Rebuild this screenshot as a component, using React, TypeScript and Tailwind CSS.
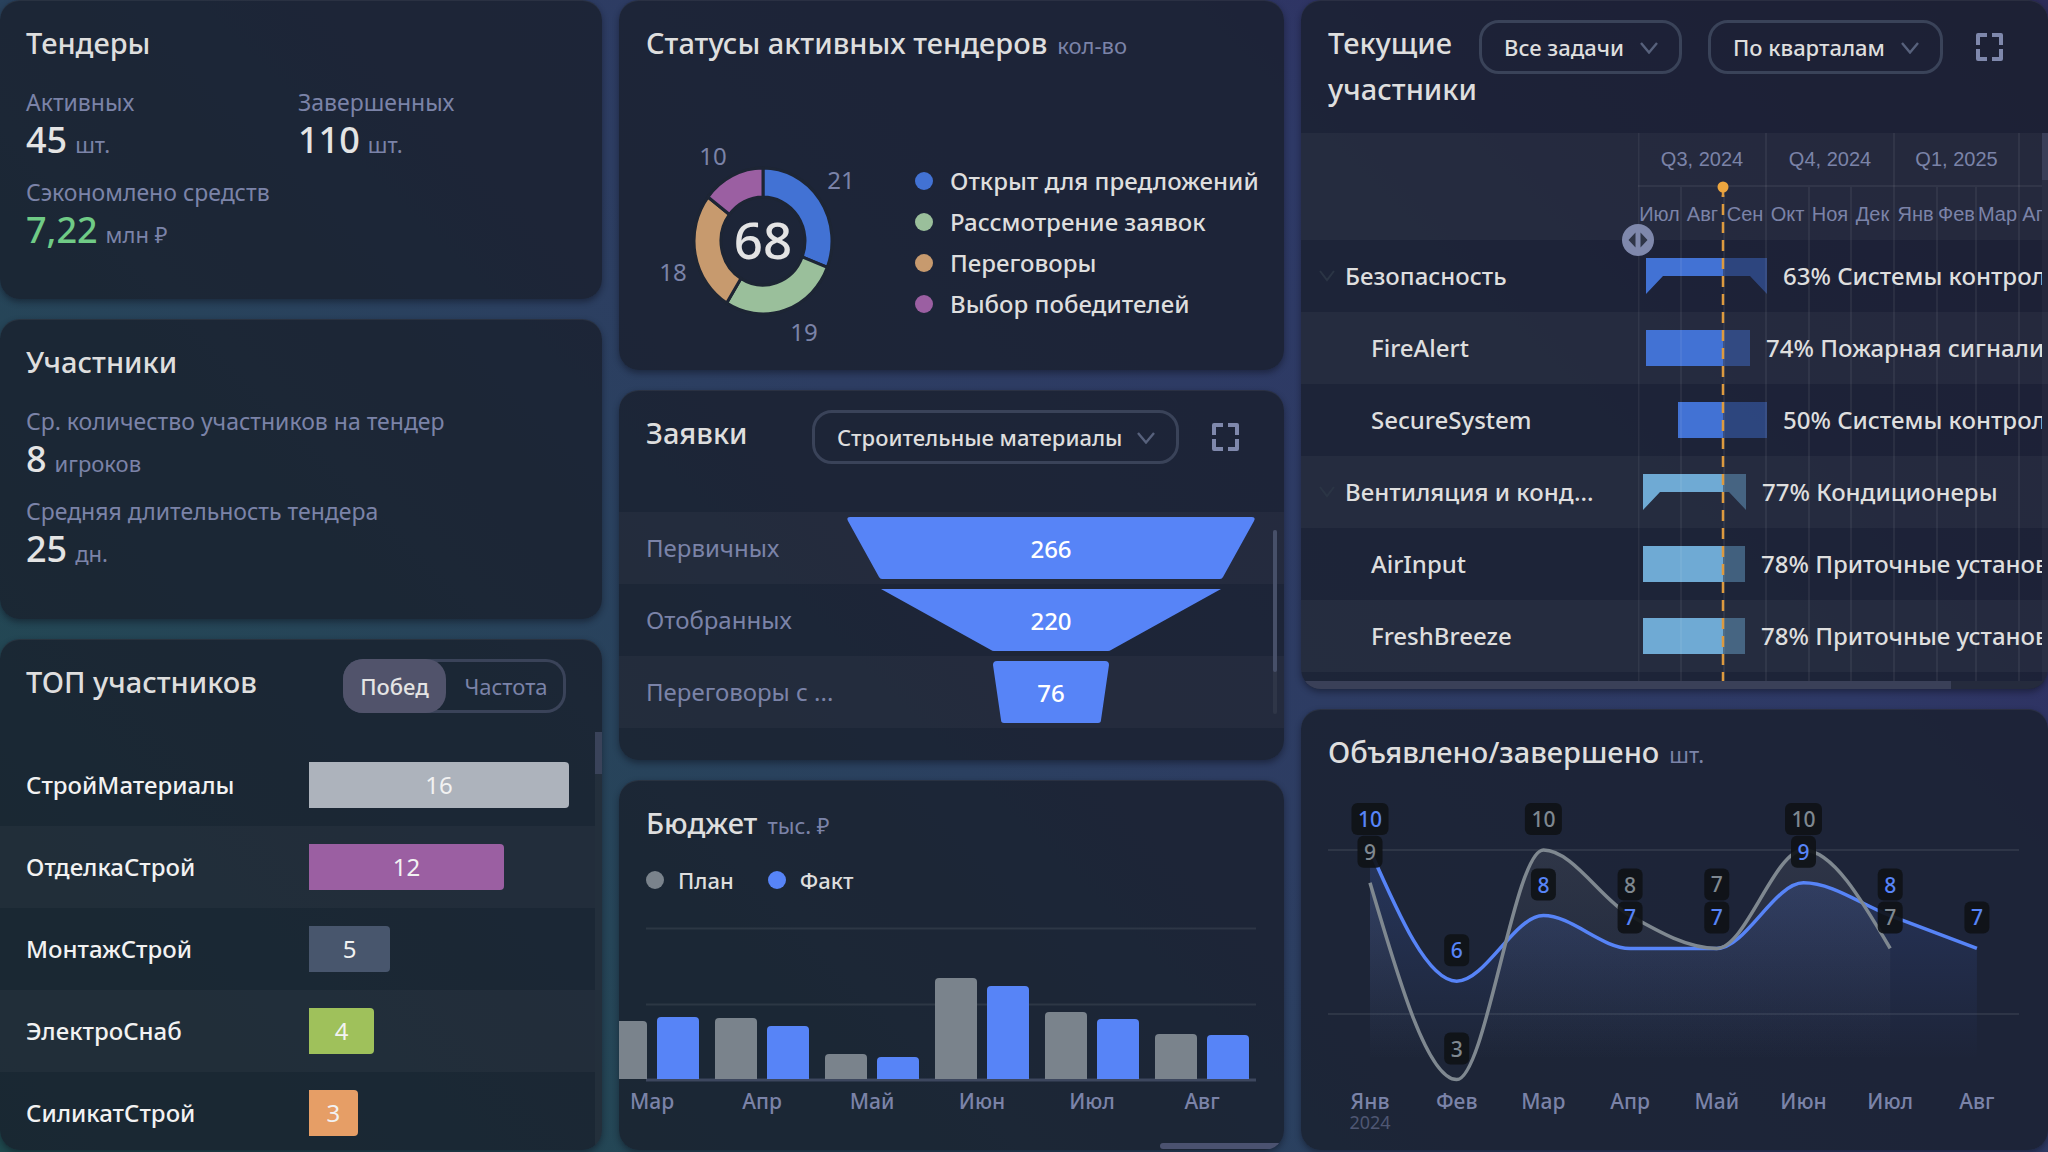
import React, { useState } from "react";

const MONTHS = ["Янв", "Фев", "Мар", "Апр", "Май", "Июн", "Июл", "Авг"];

function Card({ className = "", children }: { className?: string; children: React.ReactNode }) {
  return (
    <section
      className={`relative min-w-0 overflow-hidden rounded-[20px] bg-[#181d29]/75 shadow-[0_3px_6px_rgba(10,14,24,0.45),inset_0_1px_0_rgba(255,255,255,0.06)] ${className}`}
    >
      {children}
    </section>
  );
}

function Title({ children, unit }: { children: React.ReactNode; unit?: string }) {
  return (
    <h2 className="text-[29px] font-medium leading-[46px] text-[#dedede]">
      {children}
      {unit && <span className="ml-2.5 text-[22px] font-normal leading-none text-[#7b83a8]">{unit}</span>}
    </h2>
  );
}

function Metric({ label, value, unit, green = false }: { label: string; value: string; unit: string; green?: boolean }) {
  return (
    <div>
      <dt className="text-[23px] leading-8 text-[#7b83a8]">{label}</dt>
      <dd className="flex items-baseline gap-2">
        <span className={`text-[36px] font-medium leading-[44px] ${green ? "text-[#70cb86]" : "text-[#e4e4e4]"}`}>{value}</span>
        <span className="text-[22px] leading-none text-[#7b83a8]">{unit}</span>
      </dd>
    </div>
  );
}

function Picker({ label, options, className }: { label: string; options: string[]; className: string }) {
  return (
    <div className={`relative shrink-0 ${className}`}>
      <select
        aria-label={label}
        className="h-[54px] w-full appearance-none rounded-[20px] border-[3px] border-[#3a4359] bg-transparent pl-[22px] pr-12 text-[22px] font-medium text-[#dedede] outline-none"
      >
        {options.map((o) => (
          <option key={o} className="bg-[#1c2637]">{o}</option>
        ))}
      </select>
      <svg viewBox="0 0 18 12" className="pointer-events-none absolute right-6 top-[22px] h-3 w-[18px]" fill="none" stroke="#57617c" strokeWidth="2.4">
        <path d="M1 1l8 9.5L17 1" />
      </svg>
    </div>
  );
}

function ExpandButton() {
  return (
    <button type="button" aria-label="Развернуть" className="mt-[13px] h-7 w-[27px] shrink-0">
      <svg viewBox="0 0 27 28" className="h-7 w-[27px]" fill="none" stroke="#7f88ac" strokeWidth="4" strokeLinejoin="round">
        <path d="M2 12V2H11M16 2H25V12M25 16V26H16M11 26H2V16" />
      </svg>
    </button>
  );
}

/* ---------- ТОП участников ---------- */

const LEADERS = [
  { name: "СтройМатериалы", wins: 16, color: "bg-[#adb3bc]" },
  { name: "ОтделкаСтрой", wins: 12, color: "bg-[#9b5fa2]" },
  { name: "МонтажСтрой", wins: 5, color: "bg-[#48566d]" },
  { name: "ЭлектроСнаб", wins: 4, color: "bg-[#9fc15b]" },
  { name: "СиликатСтрой", wins: 3, color: "bg-[#e69e66]" },
];

const MODES = [
  { name: "Побед", width: "w-[103px]" },
  { name: "Частота", width: "w-[120px]" },
];

function Leaders() {
  const [mode, setMode] = useState("Побед");
  return (
    <Card className="flex flex-1 flex-col">
      <div className="flex items-start justify-between pl-[26px] pr-9 pt-5">
        <Title>ТОП участников</Title>
        <div className="flex h-[54px] rounded-[20px] shadow-[inset_0_0_0_3px_#3a4359]">
          {MODES.map((m) => (
            <button
              key={m.name}
              type="button"
              aria-pressed={mode === m.name}
              onClick={() => setMode(m.name)}
              className={`rounded-[20px] text-[22px] ${m.width} ${mode === m.name ? "bg-[#51536b] font-medium text-[#e4e4e4]" : "text-[#7b83a8]"}`}
            >
              {m.name}
            </button>
          ))}
        </div>
      </div>
      <div className="mt-[19px] flex h-[418px] overflow-hidden">
        <ul className="min-w-0 flex-1 pt-3">
          {LEADERS.map((l) => (
            <li key={l.name} className="flex h-[82px] items-center pl-[26px] pr-[26px] even:bg-white/[0.03]">
              <span className="w-[283px] shrink-0 text-[24px] font-medium text-[#f2f2f2]">{l.name}</span>
              <div className="flex-1">
                <div
                  className={`flex h-[46px] items-center justify-center rounded-r-[4px] text-[24px] text-[#f2f2f2] ${l.color}`}
                  style={{ width: `${(l.wins / 16) * 100}%` }}
                >
                  {l.wins}
                </div>
              </div>
            </li>
          ))}
        </ul>
        <div className="w-[7px] bg-white/[0.04]">
          <div className="h-[42px] bg-[#3a435a]" />
        </div>
      </div>
    </Card>
  );
}

/* ---------- Статусы ---------- */

const STATUSES = [
  { name: "Открыт для предложений", n: 21, fill: "#4272d4", dot: "bg-[#4272d4]", lx: 195, ly: 53 },
  { name: "Рассмотрение заявок", n: 19, fill: "#9abf9b", dot: "bg-[#9abf9b]", lx: 158, ly: 205 },
  { name: "Переговоры", n: 18, fill: "#c79a6e", dot: "bg-[#c79a6e]", lx: 27, ly: 145 },
  { name: "Выбор победителей", n: 10, fill: "#9b5fa2", dot: "bg-[#9b5fa2]", lx: 67, ly: 29 },
];

function Donut() {
  const total = STATUSES.reduce((s, x) => s + x.n, 0);
  const at = (v: number, rx: number, ry: number) => {
    const a = (v / total) * Math.PI * 2;
    return `${(117 + rx * Math.sin(a)).toFixed(2)} ${(105 - ry * Math.cos(a)).toFixed(2)}`;
  };
  let from = 0;
  return (
    <svg viewBox="0 0 240 212" className="w-[240px] shrink-0" textAnchor="middle">
      {STATUSES.map((s) => {
        const a = from;
        const b = (from += s.n);
        return (
          <g key={s.name}>
            <path
              d={`M${at(a, 69, 73)}A69 73 0 0 1 ${at(b, 69, 73)}L${at(b, 42, 44)}A42 44 0 0 0 ${at(a, 42, 44)}Z`}
              fill={s.fill}
              stroke="#1d2534"
              strokeWidth="3"
            />
            <text x={s.lx} y={s.ly} fontSize="24" fill="#7b83a8">{s.n}</text>
          </g>
        );
      })}
      <text x="117" y="123" fontSize="51" fontWeight="500" fill="#e4e4e4">{total}</text>
    </svg>
  );
}

/* ---------- Заявки ---------- */

const FUNNEL = [
  { name: "Первичных", n: 266, d: "M3 0H405Q409 0 407 4L376 60Q375 62 373 62H35Q33 62 32 60L1 4Q-1 0 3 0Z" },
  { name: "Отобранных", n: 220, d: "M34 0H374L264 61Q263 62 261 62H147Q145 62 144 61Z" },
  { name: "Переговоры с ...", n: 76, d: "M150 0H258Q262 0 262 4L254 59Q254 62 251 62H157Q154 62 154 59L146 4Q146 0 150 0Z" },
];

function Requests() {
  return (
    <Card className="h-[370px]">
      <div className="flex items-start pl-[27px] pr-[45px] pt-5">
        <Title>Заявки</Title>
        <Picker label="Категория заявок" options={["Строительные материалы"]} className="ml-auto mr-[33px] w-[367px]" />
        <ExpandButton />
      </div>
      <ul className="mt-12">
        {FUNNEL.map((f) => (
          <li key={f.name} className="flex h-[72px] items-center pl-[27px] pr-[29px] odd:bg-white/[0.03]">
            <span className="w-[201px] shrink-0 text-[24px] text-[#7b83a8]">{f.name}</span>
            <svg viewBox="0 0 408 62" className="h-[62px] min-w-0 flex-1">
              <path d={f.d} fill="#5784f7" />
              <text x="204" y="41" fontSize="24" fontWeight="500" fill="#fff" textAnchor="middle">{f.n}</text>
            </svg>
          </li>
        ))}
      </ul>
      <div className="absolute right-[7px] top-[140px] h-[184px] w-1 rounded bg-white/[0.05]">
        <div className="h-[142px] rounded bg-[#475069]" />
      </div>
    </Card>
  );
}

/* ---------- Бюджет ---------- */

const BUDGET = [
  { m: "Мар", plan: 58, fact: 62 },
  { m: "Апр", plan: 61, fact: 53 },
  { m: "Май", plan: 25, fact: 22 },
  { m: "Июн", plan: 101, fact: 93 },
  { m: "Июл", plan: 67, fact: 60 },
  { m: "Авг", plan: 45, fact: 44 },
];

const topRounded = (x: number, h: number) => `M${x} 180V${180 - h + 4}q0 -4 4 -4h34q4 0 4 4V180Z`;

function Budget() {
  return (
    <Card className="flex-1">
      <div className="px-[27px] pt-5">
        <Title unit="тыс. ₽">Бюджет</Title>
        <ul className="mt-[18px] flex h-8 items-center gap-[34px] text-[22px] font-medium text-[#dedede]">
          <li className="flex items-center gap-3.5"><i className="size-[18px] rounded-full bg-[#7a838c]" />План</li>
          <li className="flex items-center gap-3.5"><i className="size-[18px] rounded-full bg-[#5784f7]" />Факт</li>
        </ul>
      </div>
      <svg viewBox="0 0 665 230" className="mt-[3px] w-full" textAnchor="middle">
        <path d="M27 29.5H637M27 105.5H637" stroke="#fff" strokeOpacity="0.08" strokeWidth="2" />
        <path d="M27 181H637" stroke="#3d475e" strokeWidth="3" />
        {BUDGET.map((b, i) => (
          <g key={b.m}>
            <path d={topRounded(-14 + i * 110, b.plan)} fill="#7a838c" />
            <path d={topRounded(38 + i * 110, b.fact)} fill="#5784f7" />
            <text x={33 + i * 110} y="210" fontSize="21" fontWeight="500" fill="#7b83a8">{b.m}</text>
          </g>
        ))}
      </svg>
      <div className="absolute bottom-px right-0 h-1.5 w-[124px] rounded-l bg-[#4b5270]" />
    </Card>
  );
}

/* ---------- Гантт ---------- */

const QUARTERS = [
  { t: "Q3, 2024", w: 128 },
  { t: "Q4, 2024", w: 128 },
  { t: "Q1, 2025", w: 125 },
  { t: "Q2, 2025", w: 128 },
];
const SCALE = [
  ["Июл", 43], ["Авг", 43], ["Сен", 42], ["Окт", 43], ["Ноя", 42], ["Дек", 43], ["Янв", 43], ["Фев", 39], ["Мар", 43], ["Апр", 42],
] as const;
const LINES = [43, 86, 128, 171, 213, 256, 299, 338, 381];
const NOW = 85;

const TASKS = [
  { name: "Безопасность", group: true, from: 8, to: 129, label: "63% Системы контроля доступа", color: "#4272d4" },
  { name: "FireAlert", group: false, from: 8, to: 112, label: "74% Пожарная сигнализация", color: "#4272d4" },
  { name: "SecureSystem", group: false, from: 40, to: 129, label: "50% Системы контроля доступа", color: "#4272d4" },
  { name: "Вентиляция и конд...", group: true, from: 5, to: 108, label: "77% Кондиционеры", color: "#6faad4" },
  { name: "AirInput", group: false, from: 5, to: 107, label: "78% Приточные установки", color: "#6faad4" },
  { name: "FreshBreeze", group: false, from: 5, to: 107, label: "78% Приточные установки", color: "#6faad4" },
];

function TaskBar({ from, to, group, color }: { from: number; to: number; group: boolean; color: string }) {
  const w = to - from;
  const done = NOW - from;
  const tail = group ? 17 : 0;
  return (
    <svg width={w} height="36" className="shrink-0">
      <path d={group ? `M0 0H${done}V18H${tail}L0 36Z` : `M0 0H${done}V36H0Z`} fill={color} />
      <path d={group ? `M${done} 0H${w}V36L${w - tail} 18H${done}Z` : `M${done} 0H${w}V36H${done}Z`} fill={color} fillOpacity="0.45" />
    </svg>
  );
}

function Gantt() {
  return (
    <Card className="h-[689px]">
      <div className="flex h-[133px] items-start pl-[27px] pr-[45px] pt-5">
        <div className="w-[120px] shrink-0">
          <Title>Текущие участники</Title>
        </div>
        <Picker label="Фильтр задач" options={["Все задачи"]} className="ml-auto mr-[26px] w-[203px]" />
        <Picker label="Масштаб" options={["По кварталам"]} className="mr-[33px] w-[235px]" />
        <ExpandButton />
      </div>

      <div className="relative h-[548px] overflow-hidden">
        <div className="flex h-[107px] bg-white/[0.035]">
          <div className="w-[337px] shrink-0" />
          <div className="mr-1.5 min-w-0 flex-1 overflow-hidden font-['Liberation_Sans',sans-serif] text-[20px] text-[#7b83a8]">
            <div className="flex h-[54px] border-b-2 border-white/[0.06]">
              {QUARTERS.map((q) => (
                <span key={q.t} className="flex shrink-0 items-center justify-center" style={{ width: q.w }}>{q.t}</span>
              ))}
            </div>
            <div className="flex h-[53px]">
              {SCALE.map(([m, w]) => (
                <span key={m} className="flex shrink-0 items-center justify-center" style={{ width: w }}>{m}</span>
              ))}
            </div>
          </div>
        </div>
        {TASKS.map((t) => (
          <div key={t.name} className="flex h-[72px] items-center text-[24px] font-medium text-[#dedede] odd:bg-white/[0.035]">
            <div className="flex w-[337px] shrink-0 items-center whitespace-nowrap pl-[18px]">
              {t.group ? (
                <button type="button" aria-label={`Свернуть: ${t.name}`} className="mr-[10px] w-4">
                  <svg viewBox="0 0 16 12" className="h-3 w-4" fill="none" stroke="#2b3545" strokeWidth="2">
                    <path d="M1 1l7 9 7-9" />
                  </svg>
                </button>
              ) : (
                <span className="w-[52px]" />
              )}
              {t.name}
            </div>
            <div className="mr-1.5 flex min-w-0 flex-1 items-center gap-4 overflow-hidden whitespace-nowrap">
              <div style={{ paddingLeft: t.from }} className="shrink-0">
                <TaskBar {...t} />
              </div>
              {t.label}
            </div>
          </div>
        ))}

        <svg className="pointer-events-none absolute left-[337px] top-0 h-full w-[411px]" viewBox="0 0 411 548" fill="none">
          <path d="M0.5 0V548" stroke="#fff" strokeOpacity="0.06" strokeWidth="2" />
          {LINES.map((x) => (
            <path key={x} d={`M${x} ${x === 128 || x === 256 || x === 381 ? 0 : 54}V548`} stroke="#fff" strokeOpacity="0.06" strokeWidth="2" />
          ))}
          <path d="M85 62V548" stroke="#dd9a3f" strokeWidth="2.5" strokeDasharray="11 7" strokeDashoffset="-9" />
          <path d="M85 54V64" stroke="#dd9a3f" strokeWidth="2.5" />
          <circle cx="85" cy="54" r="5.5" fill="#eda63f" />
        </svg>
        <button type="button" aria-label="Ширина столбца" className="absolute left-[321px] top-[91px] size-8 rounded-full bg-[#7f88ac]">
          <svg viewBox="0 0 32 32" className="size-8" fill="#2f3547">
            <path d="M13.5 8.5V23.5L6.5 16ZM18.5 8.5V23.5L25.5 16Z" />
          </svg>
        </button>
        <div className="absolute right-0 top-0 h-full w-1.5 bg-white/[0.03]">
          <div className="h-[47px] bg-[#3a3f58]" />
        </div>
      </div>
      <div className="h-2 bg-[#252b3d]">
        <div className="h-full w-[87%] bg-[#3a4058]" />
      </div>
    </Card>
  );
}

/* ---------- Объявлено/завершено ---------- */

const ANNOUNCED = [10, 6, 8, 7, 7, 9, 8, 7];
const FINISHED = [9, 3, 10, 8, 7, 10, 7];
const STEP = 86.7;
const px = (i: number) => 69 + i * STEP;
const py = (v: number) => 70 + (10 - v) * 32.8;

function monotone(values: number[]) {
  const n = values.length;
  const slope = values.slice(1).map((v, i) => (py(v) - py(values[i])) / STEP);
  const m = values.map((_, i) => {
    if (i === 0 || i === n - 1) return 0;
    const a = slope[i - 1];
    const b = slope[i];
    return (Math.sign(a) + Math.sign(b)) * Math.min(Math.abs(a), Math.abs(b), 0.5 * Math.abs((a + b) / 2)) || 0;
  });
  m[0] = (3 * slope[0] - m[1]) / 2;
  m[n - 1] = (3 * slope[n - 2] - m[n - 2]) / 2;
  const h = STEP / 3;
  let d = `M${px(0)} ${py(values[0])}`;
  for (let i = 1; i < n; i++) {
    d += `C${px(i - 1) + h} ${py(values[i - 1]) + m[i - 1] * h} ${px(i) - h} ${py(values[i]) - m[i] * h} ${px(i)} ${py(values[i])}`;
  }
  return d;
}

/* Equal values in one month stack: the second label moves up by one badge. */
function Badge({ i, v, fill, lift = 0 }: { i: number; v: number; fill: string; lift?: number }) {
  const w = v > 9 ? 37 : 25;
  const y = py(v) - lift;
  return (
    <g>
      <rect x={px(i) - w / 2} y={y - 47} width={w} height="32" rx="6" fill="#0f1217" fillOpacity="0.92" />
      <text x={px(i)} y={y - 23} fontSize="21" fontWeight="500" fill={fill}>{v}</text>
    </g>
  );
}

function Dynamics() {
  const blue = monotone(ANNOUNCED);
  const gray = monotone(FINISHED);
  return (
    <Card className="flex-1">
      <div className="px-[27px] pt-5">
        <Title unit="шт.">Объявлено/завершено</Title>
      </div>
      <svg viewBox="0 0 747 370" className="mt-[5px] w-full" textAnchor="middle">
        <defs>
          <linearGradient id="blueArea" gradientUnits="userSpaceOnUse" x1="0" y1="70" x2="0" y2="280">
            <stop offset="0" stopColor="#4a72e0" stopOpacity="0.22" />
            <stop offset="1" stopColor="#4a72e0" stopOpacity="0" />
          </linearGradient>
          <linearGradient id="grayArea" gradientUnits="userSpaceOnUse" x1="0" y1="70" x2="0" y2="280">
            <stop offset="0" stopColor="#8a8f98" stopOpacity="0.16" />
            <stop offset="1" stopColor="#8a8f98" stopOpacity="0" />
          </linearGradient>
        </defs>
        <path d="M27 70H718M27 234H718" stroke="#fff" strokeOpacity="0.08" strokeWidth="2" />
        <path d={`${gray}V280H69Z`} fill="url(#grayArea)" />
        <path d={`${blue}V280H69Z`} fill="url(#blueArea)" />
        <path d={blue} fill="none" stroke="#5784f7" strokeWidth="3.5" />
        <path d={gray} fill="none" stroke="#7f8890" strokeWidth="3.5" />
        {FINISHED.map((v, i) => (
          <Badge key={i} i={i} v={v} fill="#7f8890" lift={v === ANNOUNCED[i] ? 33 : 0} />
        ))}
        {ANNOUNCED.map((v, i) => <Badge key={i} i={i} v={v} fill="#5784f7" />)}
        {MONTHS.map((m, i) => (
          <text key={m} x={px(i)} y="329" fontSize="21" fontWeight="500" fill="#7b83a8">{m}</text>
        ))}
        <text x="69" y="349" fontSize="18" fill="#4f5773">2024</text>
      </svg>
    </Card>
  );
}

export default function App() {
  return (
    <main className="grid min-h-screen grid-cols-[602fr_665fr_747fr] gap-[17px] bg-[linear-gradient(45deg,#1f4a4e_0%,#264558_26%,#2b4060_42%,#2d3d62_50%,#2e3966_72%,#2f3062_82%,#2c2c58_100%)] pb-0.5 font-['Noto_Sans',sans-serif]">
      <div className="flex min-w-0 flex-col gap-5">
        <Card className="h-[299px] py-5 pl-[26px] pr-8">
          <Title>Тендеры</Title>
          <dl className="mt-5 grid grid-cols-2 gap-y-3.5">
            <Metric label="Активных" value="45" unit="шт." />
            <Metric label="Завершенных" value="110" unit="шт." />
            <Metric label="Сэкономлено средств" value="7,22" unit="млн ₽" green />
          </dl>
        </Card>
        <Card className="h-[300px] py-5 pl-[26px] pr-8">
          <Title>Участники</Title>
          <dl className="mt-5 grid gap-y-3.5">
            <Metric label="Ср. количество участников на тендер" value="8" unit="игроков" />
            <Metric label="Средняя длительность тендера" value="25" unit="дн." />
          </dl>
        </Card>
        <Leaders />
      </div>

      <div className="flex min-w-0 flex-col gap-5">
        <Card className="px-[27px] pb-[22px] pt-5">
          <Title unit="кол-во">Статусы активных тендеров</Title>
          <div className="mt-[70px] flex items-center gap-[29px]">
            <Donut />
            <ul className="whitespace-nowrap text-[24px] font-medium leading-[41px] text-[#dedede]">
              {STATUSES.map((s) => (
                <li key={s.name} className="flex items-center gap-[17px]">
                  <i className={`size-[18px] rounded-full ${s.dot}`} />
                  {s.name}
                </li>
              ))}
            </ul>
          </div>
        </Card>
        <Requests />
        <Budget />
      </div>

      <div className="flex min-w-0 flex-col gap-5">
        <Gantt />
        <Dynamics />
      </div>
    </main>
  );
}
